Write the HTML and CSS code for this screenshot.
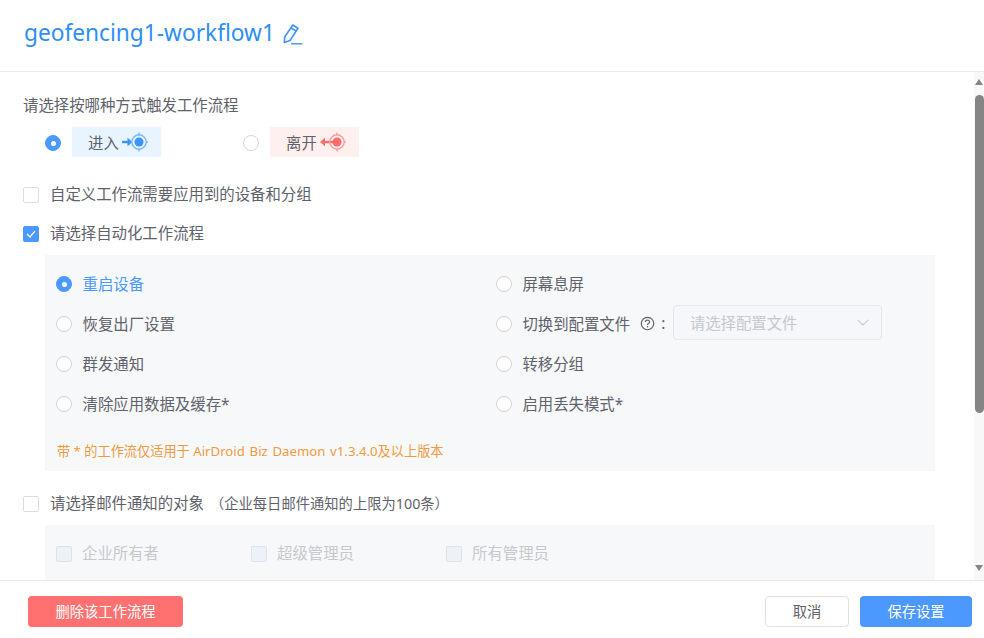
FILE: index.html
```html
<!DOCTYPE html>
<html lang="zh">
<head>
<meta charset="utf-8">
<title>geofencing1-workflow1</title>
<link rel="stylesheet" href="styles.css">
</head>
<body>
<div class="app">
  <header class="head">
    <h1 class="title">geofencing1-workflow1</h1>
    <svg class="pencil" width="20" height="21" viewBox="0 0 20 21" fill="none" stroke="#3c93fb" stroke-width="1.6">
      <path d="M9.8 1 L15 4.2 L7 16.5 L1.3 18.6 L1.8 12.8 Z" stroke-linejoin="round"/>
      <path d="M7.9 3.8 L13.1 7"/>
      <path d="M8 19.8 H19.5" stroke-width="1.4"/>
    </svg>
  </header>
  <div class="main">
    <div class="content">
      <p class="q">请选择按哪种方式触发工作流程</p>
      <div class="triggers">
        <div class="trigger">
          <span class="radio on"></span>
          <span class="tag tag-in">进入
            <svg class="tag-icon" width="32" height="20" viewBox="0 0 32 20" fill="none">
              <path d="M5 10 H12" stroke="#3c93fb" stroke-width="2.4"/>
              <path d="M10.5 5.8 L15.5 10 L10.5 14.2 Z" fill="#3c93fb"/>
              <circle cx="22" cy="10" r="7.2" stroke="#7db7fb" stroke-width="1.4"/>
              <circle cx="22" cy="10" r="4.5" fill="#3c93fb"/>
              <path d="M22 .5 V3.5 M22 16.5 V19.5 M29 10 H31" stroke="#7db7fb" stroke-width="1.4"/>
            </svg>
          </span>
        </div>
        <div class="trigger">
          <span class="radio"></span>
          <span class="tag tag-out">离开
            <svg class="tag-icon" width="32" height="20" viewBox="0 0 32 20" fill="none">
              <path d="M8 10 H18" stroke="#ff6b6b" stroke-width="2.4"/>
              <path d="M10 5.8 L5 10 L10 14.2 Z" fill="#ff6b6b"/>
              <circle cx="22" cy="10" r="7.2" stroke="#ff9c9c" stroke-width="1.4"/>
              <circle cx="22" cy="10" r="4.5" fill="#ff6b6b"/>
              <path d="M22 .5 V3.5 M22 16.5 V19.5 M29 10 H31" stroke="#ff9c9c" stroke-width="1.4"/>
            </svg>
          </span>
        </div>
      </div>
      <label class="check-row first"><span class="check"></span>自定义工作流需要应用到的设备和分组</label>
      <label class="check-row second"><span class="check on">
        <svg width="10" height="8" viewBox="0 0 10 8" fill="none" stroke="#fff" stroke-width="1.2"><path d="M1 4 L4 7 L9 1"/></svg>
      </span>请选择自动化工作流程</label>
      <section class="panel">
        <div class="options">
          <div class="opt active"><span class="radio on"></span>重启设备</div>
          <div class="opt"><span class="radio"></span>屏幕息屏</div>
          <div class="opt"><span class="radio"></span>恢复出厂设置</div>
          <div class="opt"><span class="radio"></span>切换到配置文件
            <svg class="help" width="15" height="15" viewBox="0 0 14 14" fill="none" stroke="#606266">
              <circle cx="7" cy="7" r="5.8" stroke-width="1.1"/>
              <path d="M5 5.7 C5 3.3 9 3.3 9 5.6 C9 6.9 7 6.8 7 8.4" stroke-width="1.1"/>
              <path d="M7 9.3 V10.6" stroke-width="1.2"/>
            </svg>
            <span class="colon">:</span>
            <div class="select">请选择配置文件
              <svg class="chev" width="12" height="7" viewBox="0 0 12 7" fill="none" stroke="#c4c8d0" stroke-width="1.1"><path d="M.8 .8 L6 6 L11.2 .8"/></svg>
            </div>
          </div>
          <div class="opt"><span class="radio"></span>群发通知</div>
          <div class="opt"><span class="radio"></span>转移分组</div>
          <div class="opt"><span class="radio"></span>清除应用数据及缓存*</div>
          <div class="opt"><span class="radio"></span>启用丢失模式*</div>
        </div>
        <p class="note">带 * 的工作流仅适用于 <span class="latin">AirDroid Biz Daemon v1.3.4.0</span>及以上版本</p>
      </section>
      <label class="check-row third"><span class="check"></span>请选择邮件通知的对象<span class="hint">（企业每日邮件通知的上限为100条）</span></label>
      <section class="panel panel-mail">
        <div class="mail"><span class="check off"></span>企业所有者</div>
        <div class="mail"><span class="check off"></span>超级管理员</div>
        <div class="mail"><span class="check off"></span>所有管理员</div>
      </section>
    </div>
    <div class="scrollbar">
      <span class="arrow up"></span>
      <span class="thumb"></span>
      <span class="arrow down"></span>
    </div>
  </div>
  <footer class="foot">
    <button class="btn danger">删除该工作流程</button>
    <div class="foot-right">
      <button class="btn plain">取消</button>
      <button class="btn primary">保存设置</button>
    </div>
  </footer>
</div>
</body>
</html>
```
FILE: styles.css
```css
* { box-sizing: border-box; }
html, body { margin: 0; padding: 0; background: #fff; }
body {
  font-family: "Noto Sans", "Noto Sans CJK SC", sans-serif;
  font-size: 15.4px;
  color: #5f626b;
}
.app { width: 984px; height: 638px; display: flex; flex-direction: column; overflow: hidden; }
.head {
  height: 72px; flex: none; display: flex; align-items: center;
  padding: 0 24px 6px; border-bottom: 1px solid #e9eaec;
}
.title { margin: 0; font-size: 22.7px; font-weight: 400; color: #2f8ff0; line-height: 1.3; }
.pencil { margin-left: 8px; margin-top: 3px; }
.main { flex: 1; display: flex; min-height: 0; }
.content { flex: 1; overflow: hidden; padding: 0 39px 0 24px; }
.q { margin: 23px 0 0 -1px; line-height: 22px; }
.triggers { display: flex; margin-top: 10px; padding-left: 21px; }
.trigger { display: flex; align-items: center; width: 198px; gap: 11px; }
.trigger .radio { margin-top: 2px; }
.radio {
  flex: none; width: 16px; height: 16px; border-radius: 50%;
  border: 1px solid #d3d4d8; background: #fff; position: relative;
}
.radio.on { background: #4b98ff; border-color: #4b98ff; }
.radio.on::after {
  content: ""; position: absolute; left: 4.5px; top: 4.5px;
  width: 5px; height: 5px; border-radius: 50%; background: #fff;
}
.tag {
  width: 89px; height: 30px; display: flex; align-items: center;
  padding-left: 16px;
}
.tag-in { background: #e8f4ff; }
.tag-out { background: #fff0f0; }
.tag-icon { flex: none; margin-left: -2px; }
.check-row { display: flex; align-items: center; line-height: 22px; margin-left: -1px; }
.first { margin-top: 27px; }
.second { margin-top: 17px; }
.third { margin-top: 22px; }
.check {
  flex: none; width: 16px; height: 16px; margin-right: 11px; border-radius: 2px;
  border: 1px solid #dcdde3; background: #fff;
  display: flex; align-items: center; justify-content: center;
}
.check.on { background: #4b98ff; border-color: #4b98ff; }
.check.off { background: #edf1fa; border-color: #dfe2ea; }
.hint { margin-left: 6px; font-size: 14.3px; }
.panel { margin: 10px 0 0 21px; width: 890px; background: #f7f8fa; }
.options {
  display: grid; grid-template-columns: 439.9px 1fr; grid-auto-rows: 40px;
  padding: 8px 0 0 11px;
}
.opt { display: flex; align-items: center; gap: 10.5px; white-space: nowrap; }
.opt .radio { margin-top: 2px; }
.opt.active { color: #4b98ff; }
.help { margin-left: -1px; }
.colon { margin-left: -4px; margin-right: -3px; }
.select {
  width: 209px; height: 35px; margin-top: -1px; padding: 0 12px 0 16px;
  display: flex; align-items: center; justify-content: space-between;
  background: #f5f7fa; border: 1px solid #e4e7ed; border-radius: 4px;
  color: #c4c8d0;
}
.note { margin: 17px 0 0 12px; padding-bottom: 9px; font-size: 13.2px; line-height: 22px; color: #f09a3f; }
.latin { word-spacing: 1.3px; }
.panel-mail {
  height: 60px; margin-top: 10px; padding: 18px 0 0 11px; display: flex;
  color: #c6c8ce;
}
.mail { display: flex; align-items: flex-start; width: 195px; line-height: 22px; }
.mail .check { margin-top: 3px; margin-right: 10px; }
.scrollbar { width: 10px; flex: none; background: #f8f8f8; display: flex; flex-direction: column; align-items: center; }
.arrow { width: 0; height: 0; border-left: 4.5px solid transparent; border-right: 4.5px solid transparent; }
.arrow.up { margin-top: 7px; border-bottom: 6px solid #858585; }
.arrow.down { margin-top: 152px; border-top: 6px solid #858585; }
.thumb { width: 9px; height: 318px; margin-top: 10px; margin-left: 1px; background: #858585; border-radius: 4.5px; }
.foot {
  height: 58px; flex: none; border-top: 1px solid #e6e7ea;
  display: flex; justify-content: space-between; padding: 15px 12px 0 28px;
}
.foot-right { display: flex; gap: 11px; }
.btn {
  height: 31px; border-radius: 4px; border: 1px solid transparent;
  font: inherit; font-size: 14.3px; padding: 2px 0 0; line-height: 1;
}
.danger { width: 155px; background: #ff7070; color: #fff; }
.plain { width: 84px; background: #fff; border-color: #dfe0e6; color: #5f626b; }
.primary { width: 112px; background: #4b98ff; color: #fff; }
```
